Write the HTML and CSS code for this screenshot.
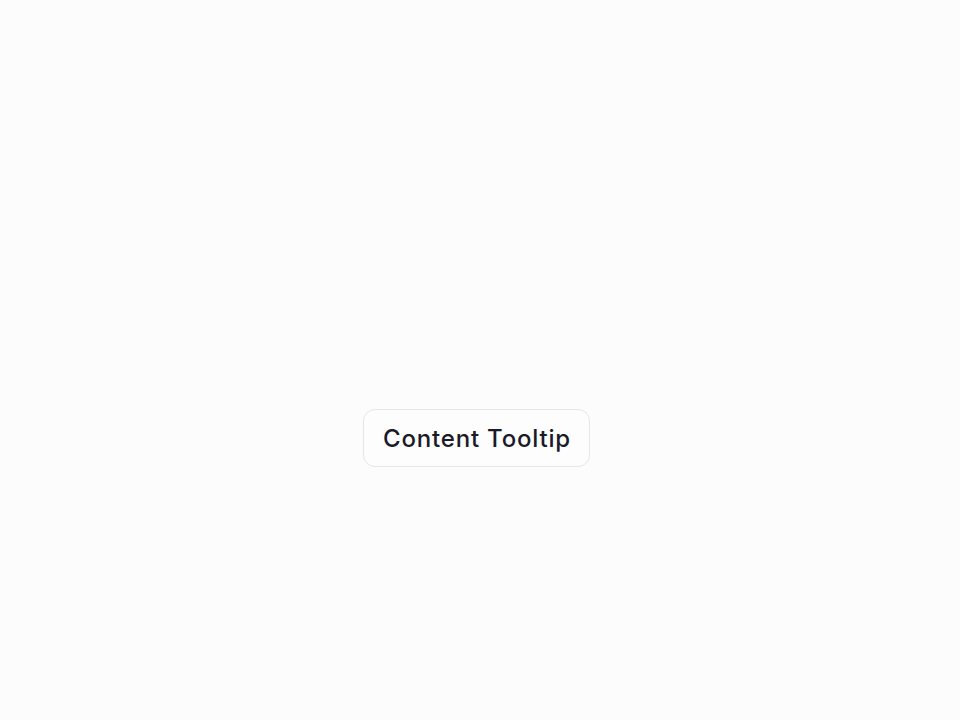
FILE: index.html
```html
<!DOCTYPE html>
<html>
<head>
<meta charset="utf-8">
<link rel="stylesheet" href="styles.css">
</head>
<body>
<main class="stage">
  <button class="trigger">Content Tooltip</button>
</main>
</body>
</html>
```
FILE: styles.css
```css
html, body {
  margin: 0;
  padding: 0;
  background: #fcfcfd;
}
.stage {
  width: 960px;
  height: 720px;
  display: flex;
  justify-content: flex-start;
  align-items: flex-start;
  padding: 409px 0 0 363px;
  box-sizing: border-box;
}
.trigger {
  width: 227px;
  height: 58px;
  box-sizing: border-box;
  border: 1px solid #e6e6ea;
  border-radius: 12px;
  background: #fdfdfe;
  color: #1a1a28;
  font-family: "Inter", sans-serif;
  font-size: 24px;
  font-weight: 500;
  letter-spacing: 0.8px;
  display: flex;
  align-items: center;
  justify-content: center;
  padding: 0 0 0 1px;
}
```
